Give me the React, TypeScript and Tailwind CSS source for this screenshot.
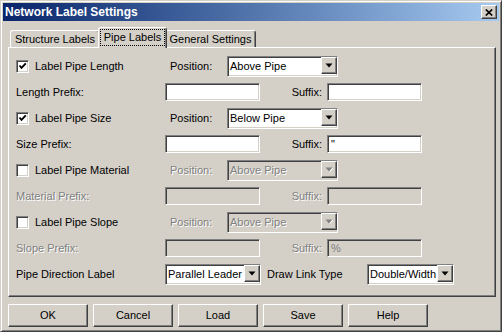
import React from 'react';

// Win2000-style bevels
const raised =
  'border border-t-white border-l-white border-r-[#404040] border-b-[#404040] shadow-[inset_-1px_-1px_0_#808080]';
const sunken =
  'border border-t-[#808080] border-l-[#808080] border-r-white border-b-white shadow-[inset_1px_1px_0_#404040,inset_-1px_-1px_0_#d4d0c8]';
const dim = 'text-[#808080] [text-shadow:1px_1px_0_#ffffff]';

function Checkbox({ checked }: { checked?: boolean }) {
  return (
    <div className={`flex h-[13px] w-[13px] shrink-0 items-center justify-center bg-white ${sunken}`}>
      {checked && (
        <svg width="9" height="9" viewBox="0 0 9 9">
          <path d="M1.5 3.5 L3.5 5.8 L7.8 1.3" stroke="#000" strokeWidth="1.9" fill="none" />
        </svg>
      )}
    </div>
  );
}

function Arrow({ disabled }: { disabled?: boolean }) {
  return (
    <div className={`flex h-[17px] w-[16px] shrink-0 items-center justify-center bg-[#d4d0c8] ${raised}`}>
      <svg width="8" height="5" viewBox="0 0 8 5">
        {disabled && <path d="M1.5 1h7l-3.5 4z" fill="#fff" />}
        <path d="M0.5 0.5h7l-3.5 4z" fill={disabled ? '#808080' : '#000'} />
      </svg>
    </div>
  );
}

function Select({ value, className, disabled }: { value: string; className: string; disabled?: boolean }) {
  return (
    <div className={`flex h-[21px] shrink-0 ${sunken} ${disabled ? 'bg-[#d4d0c8]' : 'bg-white'} ${className}`}>
      <span className={`flex-1 overflow-hidden whitespace-nowrap pl-[2px] pt-[2px] leading-[15px] ${disabled ? dim : ''}`}>
        {value}
      </span>
      <Arrow disabled={disabled} />
    </div>
  );
}

function Field({ value, className, disabled }: { value?: string; className: string; disabled?: boolean }) {
  return (
    <div
      className={`flex h-[18px] shrink-0 items-center pl-[3px] ${sunken} ${disabled ? 'bg-[#d4d0c8] text-[#808080]' : 'bg-white'} ${className}`}
    >
      {value}
    </div>
  );
}

function CheckRow({ label, checked, position, disabled }: { label: string; checked?: boolean; position: string; disabled?: boolean }) {
  return (
    <div className="flex h-[26px] items-center">
      <div className="flex w-[154px] items-center gap-[6px]">
        <Checkbox checked={checked} />
        <span>{label}</span>
      </div>
      <span className={`w-[57px] ${disabled ? dim : ''}`}>Position:</span>
      <Select value={position} className="w-[111px]" disabled={disabled} />
    </div>
  );
}

function PrefixRow({ label, suffix, disabled }: { label: string; suffix?: string; disabled?: boolean }) {
  return (
    <div className="flex h-[26px] items-center">
      <span className={`w-[149px] ${disabled ? dim : ''}`}>{label}</span>
      <Field className="w-[95px]" disabled={disabled} />
      <span className={`w-[62px] text-right ${disabled ? dim : ''}`}>Suffix:</span>
      <Field className="ml-[5px] w-[95px]" value={suffix} disabled={disabled} />
    </div>
  );
}

function Tab({ label, className }: { label: string; className: string }) {
  return (
    <div
      className={`flex h-[17px] shrink-0 items-center justify-center rounded-t-[3px] border-t border-l border-r border-t-white border-l-white border-r-[#404040] shadow-[inset_-1px_0_0_#808080] ${className}`}
    >
      {label}
    </div>
  );
}

function Button({ label }: { label: string }) {
  return (
    <div className={`flex h-[23px] w-[80px] items-center justify-center bg-[#d4d0c8] ${raised}`}>{label}</div>
  );
}

export default function App() {
  return (
    <div className="h-[336px] w-[504px] bg-white text-[11px] text-black [font-family:'Liberation_Sans',Arial,sans-serif]">
      <div className="flex h-[332px] w-[502px] flex-col border border-t-[#d4d0c8] border-l-[#d4d0c8] border-r-[#404040] border-b-[#404040] bg-[#d4d0c8] p-[2px] shadow-[inset_1px_1px_0_#ffffff,inset_-1px_-1px_0_#808080]">
        {/* title bar */}
        <div className="flex h-[18px] items-center justify-between bg-gradient-to-r from-[#0a246a] to-[#a6caf0] pl-[2px] pr-[2px]">
          <span className="text-[12px] font-bold text-white">Network Label Settings</span>
          <div className={`flex h-[14px] w-[16px] items-center justify-center bg-[#d4d0c8] ${raised}`}>
            <svg width="8" height="7" viewBox="0 0 8 7">
              <path d="M0.8 0.5 L7.2 6.5 M7.2 0.5 L0.8 6.5" stroke="#000" strokeWidth="1.7" />
            </svg>
          </div>
        </div>

        {/* tabs */}
        <div className="ml-[7px] mt-[6px] flex h-[20px] items-end">
          <Tab label="Structure Labels" className="w-[90px]" />
          <div className="relative z-10 -mx-[2px] -mb-[1px] flex h-[21px] w-[69px] shrink-0 justify-center rounded-t-[3px] border-t border-l border-r border-t-white border-l-white border-r-[#404040] bg-[#d4d0c8] shadow-[inset_-1px_0_0_#808080]">
            <div className="mt-[1px] flex h-[17px] w-[65px] items-center justify-center border border-dotted border-black">
              Pipe Labels
            </div>
          </div>
          <Tab label="General Settings" className="w-[91px]" />
        </div>

        {/* panel */}
        <div className="ml-[5px] flex h-[250px] w-[488px] flex-col border border-t-white border-l-white border-r-[#404040] border-b-[#404040] pb-[8px] pl-[7px] pt-[5px] shadow-[inset_-1px_-1px_0_#808080]">
          <CheckRow label="Label Pipe Length" checked position="Above Pipe" />
          <PrefixRow label="Length Prefix:" />
          <CheckRow label="Label Pipe Size" checked position="Below Pipe" />
          <PrefixRow label="Size Prefix:" suffix={'"'} />
          <CheckRow label="Label Pipe Material" position="Above Pipe" disabled />
          <PrefixRow label="Material Prefix:" disabled />
          <CheckRow label="Label Pipe Slope" position="Above Pipe" disabled />
          <PrefixRow label="Slope Prefix:" suffix="%" disabled />
          <div className="flex h-[26px] items-center">
            <span className="w-[149px]">Pipe Direction Label</span>
            <Select value="Parallel Leader" className="w-[96px]" />
            <span className="ml-[6px] w-[100px]">Draw Link Type</span>
            <Select value="Double/Width" className="w-[87px]" />
          </div>
        </div>

        {/* buttons */}
        <div className="ml-[5px] mt-[7px] flex gap-[5px]">
          <Button label="OK" />
          <Button label="Cancel" />
          <Button label="Load" />
          <Button label="Save" />
          <Button label="Help" />
        </div>
      </div>
    </div>
  );
}
